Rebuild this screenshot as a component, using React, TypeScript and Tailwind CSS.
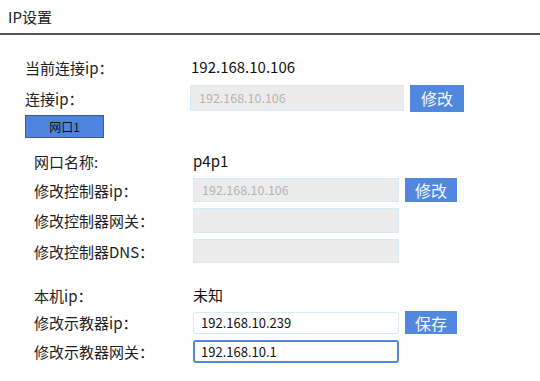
import { useState } from "react";

const FONT = "font-['Noto_Sans_CJK_SC','Noto_Sans',sans-serif]";

function Label({ children, w }: { children: string; w: string }) {
  return <div className={`${w} shrink-0 text-[15px] text-[#222] leading-none`}>{children}</div>;
}

function BlueBtn({ children, cls }: { children: string; cls: string }) {
  return (
    <button className={`${cls} bg-[#5088e0] text-[#f4f8ff] text-[16px] leading-none flex items-center justify-center`}>
      {children}
    </button>
  );
}

function GreyInput({ value, cls }: { value: string; cls: string }) {
  return (
    <div className={`${cls} bg-[#ececec] border border-[#d3ecf5] text-[12.5px] text-[#b4b4b4] flex items-center pl-[8px]`}>
      {value}
    </div>
  );
}

export default function App() {
  const [teachIp, setTeachIp] = useState("192.168.10.239");
  const [teachGw, setTeachGw] = useState("192.168.10.1");

  return (
    <div className={`w-[540px] h-[381px] bg-white overflow-hidden ${FONT}`}>
      <div className="h-[35px] border-b-2 border-[#555] pl-[8px] pt-[7px] text-[15px] leading-[20px] text-[#222]">
        IP设置
      </div>

      <div className="pl-[25px]">
        <div className="mt-[20px] h-[25px] flex items-center">
          <Label w="w-[166px]">当前连接ip：</Label>
          <span className="text-[15px] text-[#111]">192.168.10.106</span>
        </div>
        <div className="mt-[5px] h-[26px] flex items-center">
          <Label w="w-[165px]">连接ip：</Label>
          <GreyInput value="192.168.10.106" cls="w-[214px] h-[26px]" />
          <BlueBtn cls="ml-[6px] w-[54px] h-[27px]">修改</BlueBtn>
        </div>
        <div className="mt-[4px] w-[79px] h-[23px] bg-[#4f84de] border border-[#3e5d8e] text-[12px] text-[#111] flex items-center justify-center">
          网口1
        </div>
      </div>

      <div className="pl-[34px]">
        <div className="mt-[12px] h-[22px] flex items-center">
          <Label w="w-[159px]">网口名称:</Label>
          <span className="text-[15px] text-[#111]">p4p1</span>
        </div>
        <div className="mt-[6px] h-[24px] flex items-center">
          <Label w="w-[159px]">修改控制器ip：</Label>
          <GreyInput value="192.168.10.106" cls="w-[206px] h-[24px]" />
          <BlueBtn cls="ml-[6px] w-[52px] h-[24px]">修改</BlueBtn>
        </div>
        <div className="mt-[6px] h-[25px] flex items-center">
          <Label w="w-[159px]">修改控制器网关：</Label>
          <GreyInput value="" cls="w-[206px] h-[25px]" />
        </div>
        <div className="mt-[6px] h-[24px] flex items-center">
          <Label w="w-[159px]">修改控制器DNS：</Label>
          <GreyInput value="" cls="w-[206px] h-[24px]" />
        </div>
        <div className="mt-[20px] h-[24px] flex items-center">
          <Label w="w-[159px]">本机ip：</Label>
          <span className="text-[15px] text-[#111]">未知</span>
        </div>
        <div className="mt-[4px] h-[23px] flex items-center">
          <Label w="w-[159px]">修改示教器ip：</Label>
          <input
            value={teachIp}
            onChange={(e) => setTeachIp(e.target.value)}
            className="w-[206px] h-[22px] rounded-[3px] border border-[#d6ecf4] pl-[7px] text-[13px] text-[#111] outline-none"
          />
          <BlueBtn cls="ml-[6px] w-[52px] h-[23px]">保存</BlueBtn>
        </div>
        <div className="mt-[6px] h-[23px] flex items-center">
          <Label w="w-[159px]">修改示教器网关：</Label>
          <input
            value={teachGw}
            onChange={(e) => setTeachGw(e.target.value)}
            className="w-[206px] h-[23px] rounded-[3px] border-2 border-[#5088e0] pl-[6px] text-[13px] text-[#111] outline-none"
          />
        </div>
      </div>
    </div>
  );
}
